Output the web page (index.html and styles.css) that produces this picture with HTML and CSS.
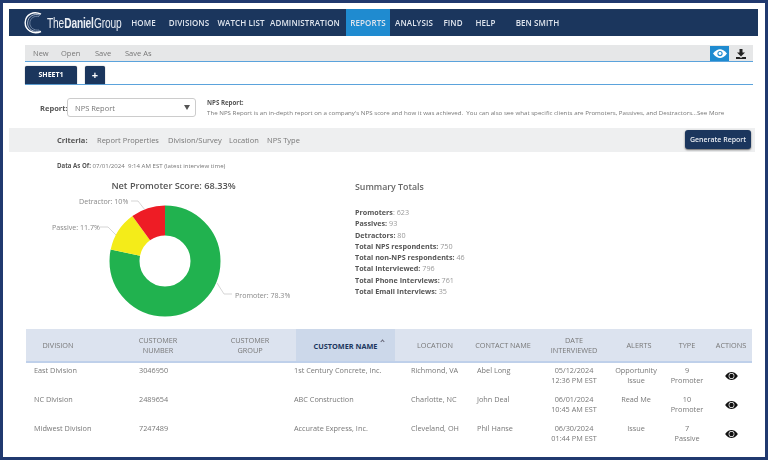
FILE: index.html
```html
<!DOCTYPE html>
<html lang="en">
<head>
<meta charset="utf-8">
<title>NPS Report</title>
<link rel="stylesheet" href="styles.css">
</head>
<body>
<div class="frame">
  <nav class="nav">
    <div class="logo">
      <svg class="logo-mark" viewBox="0 0 28 24" width="28" height="24">
        <path d="M19 3.200C12 -.5 3.500 3.200 3.200 11.500 3 19 11 24 19 20.500" fill="none" stroke="#fff" stroke-width="1.400"/>
        <path d="M18 4.200C12.500 2 6 5 5.600 12 5.400 17.800 11.500 22 18 20" fill="none" stroke="#c9d3e2" stroke-width=".8"/>
        <path d="M17 5.600C12.500 4.400 8 7 7.800 12 7.700 16.500 12 19.800 17 19" fill="none" stroke="#8fa2bd" stroke-width=".7"/>
      </svg>
      <span class="logo-text">The<b>Daniel</b>Group</span>
    </div>
    <a>HOME</a><a>DIVISIONS</a><a>WATCH LIST</a><a class="admin">ADMINISTRATION</a><a class="active">REPORTS</a><a>ANALYSIS</a><a>FIND</a><a>HELP</a><a>BEN SMITH</a>
  </nav>

  <div class="toolbar">
    <span class="tool t-new">New</span><span class="tool t-open">Open</span><span class="tool t-save">Save</span><span class="tool t-saveas">Save As</span>
    <span class="tool-btn on">
      <svg viewBox="0 0 16 10" width="14" height="9"><path d="M0 5C3 1 5.500 0 8 0s5 1 8 5c-3 4-5.500 5-8 5S3 9 0 5z" fill="#fff"/><circle cx="8" cy="5" r="3" fill="#1f8bd0"/><circle cx="8" cy="5" r="1.700" fill="#fff"/></svg>
    </span>
    <span class="tool-btn dl">
      <svg viewBox="0 0 10 10" width="10" height="10"><path d="M3.500 0h3v3.500H9L5 7.500 1 3.500h2.500z" fill="#222"/><path d="M0 8h3.500l1.500 1 1.500-1H10v2H0z" fill="#222"/></svg>
    </span>
  </div>

  <div class="tabs">
    <span class="tab">SHEET1</span>
    <span class="tab add">+</span>
  </div>

  <div class="report">
    <label class="report-label">Report:</label>
    <div class="select"><span>NPS Report</span><i class="caret"></i></div>
    <div class="desc">
      <b>NPS Report:</b>
      <p>The NPS Report is an in-depth report on a company's NPS score and how it was achieved.&nbsp; You can also see what specific clients are Promoters, Passives, and Destractors...See More</p>
    </div>
  </div>

  <div class="criteria">
    <b>Criteria:</b>
    <span class="c1">Report Properties</span><span class="c2">Division/Survey</span><span class="c3">Location</span><span class="c4">NPS Type</span>
    <button class="generate">Generate Report</button>
  </div>

  <p class="asof"><b>Data As Of:</b> 07/01/2024&nbsp; 9:14 AM EST (latest interview time)</p>

  <section class="overview">
    <svg class="chart" viewBox="0 0 340 155" width="340" height="155">
      <text class="chart-title" x="164.500" y="16.500" text-anchor="middle">Net Promoter Score: 68.33%</text>
      <g fill="none" stroke-width="30" transform="rotate(-90 156 89)">
        <circle cx="156" cy="89" r="40.500" stroke="#21b24f" pathLength="100" stroke-dasharray="78.300 21.700"/>
        <circle cx="156" cy="89" r="40.500" stroke="#f4ec19" pathLength="100" stroke-dasharray="11.700 88.300" stroke-dashoffset="-78.300"/>
        <circle cx="156" cy="89" r="40.500" stroke="#ee1c25" pathLength="100" stroke-dasharray="10 90" stroke-dashoffset="-90"/>
      </g>
      <g fill="none" stroke="#bbb" stroke-width=".6">
        <path d="M122 29h7l7 9"/>
        <path d="M91 55h8l8 8"/>
        <path d="M208 111l7 11h8"/>
      </g>
      <text class="chart-label" x="70" y="32">Detractor: 10%</text>
      <text class="chart-label" x="43" y="58">Passive: 11.7%</text>
      <text class="chart-label" x="226" y="126">Promoter: 78.3%</text>
    </svg>
    <div class="summary">
      <h2>Summary Totals</h2>
      <ul>
        <li><b>Promoters</b>: 623</li>
        <li><b>Passives:</b> 93</li>
        <li><b>Detractors:</b> 80</li>
        <li><b>Total NPS respondents:</b> 750</li>
        <li><b>Total non-NPS respondents:</b> 46</li>
        <li><b>Total Interviewed:</b> 796</li>
        <li><b>Total Phone Interviews:</b> 761</li>
        <li><b>Total Email Interviews:</b> 35</li>
      </ul>
    </div>
  </section>

  <table class="grid">
    <colgroup>
      <col class="w1"><col class="w2"><col class="w3"><col class="w4"><col class="w5"><col class="w6"><col class="w7"><col class="w8"><col class="w9"><col class="w10">
    </colgroup>
    <thead>
      <tr>
        <th class="h1">DIVISION</th><th class="h2">CUSTOMER NUMBER</th><th class="h3">CUSTOMER GROUP</th>
        <th class="sorted">CUSTOMER NAME<span class="sort"></span></th>
        <th class="h5">LOCATION</th><th class="h6">CONTACT NAME</th><th>DATE<br>INTERVIEWED</th><th class="h8">ALERTS</th><th>TYPE</th><th>ACTIONS</th>
      </tr>
    </thead>
    <tbody>
      <tr>
        <td class="d1">East Division</td><td class="d2">3046950</td><td></td><td class="d4">1st Century Concrete, Inc.</td><td class="d5">Richmond, VA</td><td class="d6">Abel Long</td>
        <td class="mid">05/12/2024<br>12:36 PM EST</td><td class="mid">Opportunity<br>Issue</td><td class="mid">9<br>Promoter</td>
        <td class="mid"><svg class="eye" viewBox="0 0 16 10" width="13" height="8"><path d="M0 5C3 1 5.500 0 8 0s5 1 8 5c-3 4-5.500 5-8 5S3 9 0 5z" fill="#111"/><circle cx="8" cy="5" r="3.600" fill="#fff"/><circle cx="8" cy="5" r="2.800" fill="#111"/></svg></td>
      </tr>
      <tr>
        <td class="d1">NC Division</td><td class="d2">2489654</td><td></td><td class="d4">ABC Construction</td><td class="d5">Charlotte, NC</td><td class="d6">John Deal</td>
        <td class="mid">06/01/2024<br>10:45 AM EST</td><td class="mid">Read Me</td><td class="mid">10<br>Promoter</td>
        <td class="mid"><svg class="eye" viewBox="0 0 16 10" width="13" height="8"><path d="M0 5C3 1 5.500 0 8 0s5 1 8 5c-3 4-5.500 5-8 5S3 9 0 5z" fill="#111"/><circle cx="8" cy="5" r="3.600" fill="#fff"/><circle cx="8" cy="5" r="2.800" fill="#111"/></svg></td>
      </tr>
      <tr>
        <td class="d1">Midwest Division</td><td class="d2">7247489</td><td></td><td class="d4">Accurate Express, Inc.</td><td class="d5">Cleveland, OH</td><td class="d6">Phil Hanse</td>
        <td class="mid">06/30/2024<br>01:44 PM EST</td><td class="mid">Issue</td><td class="mid">7<br>Passive</td>
        <td class="mid"><svg class="eye" viewBox="0 0 16 10" width="13" height="8"><path d="M0 5C3 1 5.500 0 8 0s5 1 8 5c-3 4-5.500 5-8 5S3 9 0 5z" fill="#111"/><circle cx="8" cy="5" r="3.600" fill="#fff"/><circle cx="8" cy="5" r="2.800" fill="#111"/></svg></td>
      </tr>
    </tbody>
  </table>
</div>
</body>
</html>
```
FILE: styles.css
```css
* { box-sizing: border-box; }
html, body { margin: 0; padding: 0; background: #fff; }
body { width: 768px; height: 460px; overflow: hidden; font-family: "Open Sans", "Liberation Sans", sans-serif; color: #6b6b6b; }
p, h2, ul { margin: 0; padding: 0; }
.frame { width: 768px; height: 460px; border: 3px solid #20396f; padding-top: 6px; overflow: hidden; }
.frame > * { filter: blur(.35px); }

.nav { margin-left: 6px; width: 749px; height: 27px; background: #1b365d; display: grid; grid-template-columns: 114px 41px 50px 54px 78px 44px 48px 30px 35px 69px; align-items: stretch; }
.nav a { color: #dfe5ee; font-size: 8px; font-weight: 600; line-height: 27px; text-align: center; white-space: nowrap; letter-spacing: .1px; }
.nav a.admin { padding-right: 4px; }
.nav a.active { background: #1f8bd0; }
.logo { display: flex; align-items: center; padding-left: 13px; min-width: 0; }
.logo-mark { flex: none; margin-right: -3px; }
.logo-text { color: #e9edf3; font-family: "Liberation Sans", sans-serif; font-size: 15px; letter-spacing: -.3px; white-space: nowrap; transform: scaleX(.68); transform-origin: left center; }
.logo-text b { font-weight: 700; margin: 0 .5px; }

.toolbar { margin: 9px 0 0 22px; width: 728px; height: 17px; background: #e6e7e8; border-bottom: 1px solid #5ba3dc; display: flex; font-size: 7.500px; line-height: 16px; color: #777; }
.tool { white-space: nowrap; }
.t-new { margin-left: 8px; width: 28px; }
.t-open { width: 34px; }
.t-save { width: 30px; }
.t-saveas { flex: 1; }
.tool-btn { width: 19px; height: 15px; margin-top: 1px; display: flex; align-items: center; justify-content: center; }
.tool-btn.on { background: #1f8bd0; }
.tool-btn.dl { width: 24px; }

.tabs { margin: 4px 0 0 22px; width: 728px; height: 19px; border-bottom: 1px solid #5ba3dc; display: flex; gap: 8px; align-items: flex-end; }
.tab { width: 52px; height: 18px; background: #1b365d; color: #fff; font-size: 7px; font-weight: 700; line-height: 17px; text-align: center; border-radius: 2px 2px 0 0; box-shadow: 0 0 1px #555; }
.tab.add { width: 20px; font-size: 11px; line-height: 18px; }

.report { margin: 13px 0 0 37px; height: 19px; display: flex; align-items: flex-start; }
.report-label { width: 27px; margin-top: 5px; font-size: 7.500px; line-height: 10px; font-weight: 700; color: #555; white-space: nowrap; }
.select { width: 129px; height: 19px; padding: 0 4px 0 7px; border: 1px solid #ccc; border-radius: 3px; display: flex; align-items: center; justify-content: space-between; font-size: 7.500px; color: #777; }
.caret { width: 0; height: 0; border-left: 3px solid transparent; border-right: 3px solid transparent; border-top: 5px solid #555; margin-right: 1px; }
.desc { margin-left: 11px; font-size: 6.180px; line-height: 9.500px; color: #777; white-space: nowrap; }
.desc b { color: #555; display: block; }

.criteria { margin: 11px 0 0 6px; width: 746px; height: 24px; background: #eeeff0; position: relative; display: flex; align-items: center; font-size: 7.500px; color: #777; white-space: nowrap; }
.criteria b { margin-left: 48px; width: 40px; color: #555; }
.c1 { width: 71px; }
.c2 { width: 61px; }
.c3 { width: 38px; }
.c4 { width: 40px; }
.generate { position: absolute; left: 676px; top: 2px; width: 66px; height: 19px; padding: 0; border: 0; border-radius: 3px; background: #1b365d; color: #e9edf3; box-shadow: 0 1px 2px #666; font: 600 7px "Open Sans", sans-serif; line-height: 17px; }

.asof { margin: 9px 0 0 54px; height: 9px; font-size: 6.100px; line-height: 9px; color: #777; white-space: nowrap; }
.asof b { color: #555; }

.overview { margin: 2px 0 0 6px; height: 157px; display: flex; }
.chart { flex: none; display: block; }
.chart-title { font-size: 9.200px; font-weight: 600; fill: #555; }
.chart-label { font-size: 7.100px; fill: #888; }
.summary { margin-left: 6px; padding-top: 8px; }
.summary h2 { font-size: 8.800px; line-height: 14px; font-weight: 600; color: #666; }
.summary ul { list-style: none; margin-top: 13px; font-size: 7.200px; line-height: 11.300px; color: #999; white-space: nowrap; }
.summary b { color: #555; font-weight: 700; }

.grid { margin-left: 23px; width: 726px; border-collapse: collapse; table-layout: fixed; font-size: 7.300px; line-height: 10px; color: #777; }
.w1 { width: 108px; } .w2 { width: 92px; } .w3 { width: 70px; } .w4 { width: 99px; } .w5 { width: 75px; }
.w6 { width: 70px; } .w7 { width: 68px; } .w8 { width: 56px; } .w9 { width: 46px; } .w10 { width: 42px; }
.grid thead tr { background: #dce3ef; border-bottom: 2px solid #bfd0ea; }
.grid th { height: 33px; padding: 0; font-size: 7.300px; font-weight: 400; line-height: 10px; color: #777; text-align: center; }
.h1 { padding-right: 44px !important; }
.h2 { padding-right: 44px !important; }
.h3 { padding-right: 22px !important; }
.h5 { padding-left: 5px !important; }
.h6 { padding-right: 4px !important; white-space: nowrap; }
.h8 { padding-left: 6px !important; }
.grid th.sorted { background: #ccd8ea; color: #1b365d; font-weight: 700; position: relative; padding-top: 2px; white-space: nowrap; }
.sort { position: absolute; top: 11px; right: 11px; width: 3px; height: 3px; border-left: 1px solid #667; border-top: 1px solid #667; transform: rotate(45deg); }
.grid td { height: 29.500px; padding: 2px 0 0; vertical-align: top; white-space: nowrap; }
.d1 { padding-left: 8px !important; }
.d2 { padding-left: 5px !important; }
.d4 { text-indent: -2px; }
.d5 { padding-left: 16px !important; }
.d6 { padding-left: 7px !important; }
.mid { text-align: center; }
.eye { display: block; margin: 7px auto 0; }
```
